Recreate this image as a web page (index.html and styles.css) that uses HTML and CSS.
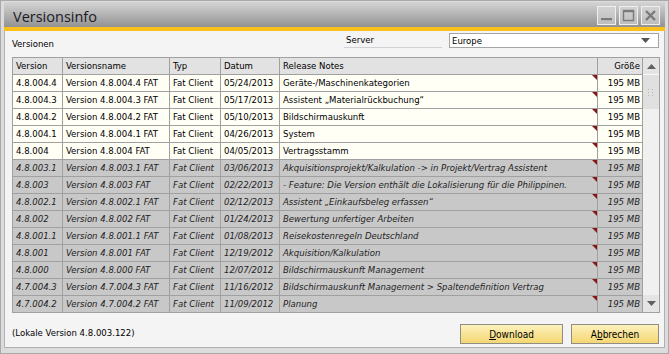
FILE: index.html
```html
<!DOCTYPE html>
<html lang="de">
<head>
<meta charset="utf-8">
<title>Versionsinfo</title>
<link rel="stylesheet" href="styles.css">
</head>
<body>
<div class="window">
  <div class="titlebar">
    <span class="title">Versionsinfo</span>
    <div class="wbtns">
      <span class="wbtn"><svg width="17" height="17" viewBox="0 0 17 17"><rect x="3" y="11" width="11" height="2.2" fill="#7a7a7a"/></svg></span>
      <span class="wbtn"><svg width="17" height="17" viewBox="0 0 17 17"><rect x="3.5" y="3.5" width="10" height="10" fill="none" stroke="#7a7a7a" stroke-width="1.4"/><rect x="3" y="3" width="11" height="2.2" fill="#7a7a7a"/></svg></span>
      <span class="wbtn"><svg width="17" height="17" viewBox="0 0 17 17"><path d="M4 4 L13 13 M13 4 L4 13" stroke="#7a7a7a" stroke-width="2.4"/></svg></span>
    </div>
  </div>
  <div class="accent"></div>
  <div class="client">
    <div class="toprow">
      <span class="lbl-versionen">Versionen</span>
      <span class="server">Server</span>
      <div class="select">
        <span>Europe</span>
        <svg width="9" height="5" viewBox="0 0 9 5"><path d="M0 0 H9 L4.5 5 Z" fill="#555"/></svg>
      </div>
    </div>
    <div class="grid">
      <table>
        <colgroup>
          <col class="c1"><col class="c2"><col class="c3"><col class="c4"><col class="c5"><col class="c6">
        </colgroup>
        <thead>
          <tr><th>Version</th><th>Versionsname</th><th>Typ</th><th>Datum</th><th>Release Notes</th><th class="num">Größe</th></tr>
        </thead>
        <tbody>
          <tr><td>4.8.004.4</td><td>Version 4.8.004.4 FAT</td><td>Fat Client</td><td>05/24/2013</td><td class="notes">Geräte-/Maschinenkategorien</td><td class="num">195 MB</td></tr>
          <tr><td>4.8.004.3</td><td>Version 4.8.004.3 FAT</td><td>Fat Client</td><td>05/17/2013</td><td class="notes">Assistent „Materialrückbuchung“</td><td class="num">195 MB</td></tr>
          <tr><td>4.8.004.2</td><td>Version 4.8.004.2 FAT</td><td>Fat Client</td><td>05/10/2013</td><td class="notes">Bildschirmauskunft</td><td class="num">195 MB</td></tr>
          <tr><td>4.8.004.1</td><td>Version 4.8.004.1 FAT</td><td>Fat Client</td><td>04/26/2013</td><td class="notes">System</td><td class="num">195 MB</td></tr>
          <tr><td>4.8.004</td><td>Version 4.8.004 FAT</td><td>Fat Client</td><td>04/05/2013</td><td class="notes">Vertragsstamm</td><td class="num">195 MB</td></tr>
          <tr class="old"><td>4.8.003.1</td><td>Version 4.8.003.1 FAT</td><td>Fat Client</td><td>03/06/2013</td><td class="notes">Akquisitionsprojekt/Kalkulation -&gt; in Projekt/Vertrag Assistent</td><td class="num">195 MB</td></tr>
          <tr class="old"><td>4.8.003</td><td>Version 4.8.003 FAT</td><td>Fat Client</td><td>02/22/2013</td><td class="notes">- Feature: Die Version enthält die Lokalisierung für die Philippinen.</td><td class="num">195 MB</td></tr>
          <tr class="old"><td>4.8.002.1</td><td>Version 4.8.002.1 FAT</td><td>Fat Client</td><td>02/12/2013</td><td class="notes">Assistent „Einkaufsbeleg erfassen“</td><td class="num">195 MB</td></tr>
          <tr class="old"><td>4.8.002</td><td>Version 4.8.002 FAT</td><td>Fat Client</td><td>01/24/2013</td><td class="notes">Bewertung unfertiger Arbeiten</td><td class="num">195 MB</td></tr>
          <tr class="old"><td>4.8.001.1</td><td>Version 4.8.001.1 FAT</td><td>Fat Client</td><td>01/08/2013</td><td class="notes">Reisekostenregeln Deutschland</td><td class="num">195 MB</td></tr>
          <tr class="old"><td>4.8.001</td><td>Version 4.8.001 FAT</td><td>Fat Client</td><td>12/19/2012</td><td class="notes">Akquisition/Kalkulation</td><td class="num">195 MB</td></tr>
          <tr class="old"><td>4.8.000</td><td>Version 4.8.000 FAT</td><td>Fat Client</td><td>12/07/2012</td><td class="notes">Bildschirmauskunft Management</td><td class="num">195 MB</td></tr>
          <tr class="old"><td>4.7.004.3</td><td>Version 4.7.004.3 FAT</td><td>Fat Client</td><td>11/16/2012</td><td class="notes">Bildschirmauskunft Management &gt; Spaltendefinition Vertrag</td><td class="num">195 MB</td></tr>
          <tr class="old last"><td>4.7.004.2</td><td>Version 4.7.004.2 FAT</td><td>Fat Client</td><td>11/09/2012</td><td class="notes">Planung</td><td class="num">195 MB</td></tr>
        </tbody>
      </table>
      <div class="scrollbar">
        <div class="sb-up"><svg width="9" height="5" viewBox="0 0 9 5"><path d="M0 5 H9 L4.5 0 Z" fill="#606060"/></svg></div>
        <div class="sb-thumb">
          <svg width="6" height="7" viewBox="0 0 6 7"><g fill="#b8b8b8"><rect x="0" y="0" width="1" height="1"/><rect x="4" y="0" width="1" height="1"/><rect x="0" y="3" width="1" height="1"/><rect x="4" y="3" width="1" height="1"/><rect x="0" y="6" width="1" height="1"/><rect x="4" y="6" width="1" height="1"/></g></svg>
        </div>
        <div class="sb-track"></div>
        <div class="sb-down"><svg width="9" height="5" viewBox="0 0 9 5"><path d="M0 0 H9 L4.5 5 Z" fill="#606060"/></svg></div>
      </div>
    </div>
    <div class="bottomrow">
      <span class="local">(Lokale Version 4.8.003.122)</span>
      <button class="btn btn-download"><u>D</u>ownload</button>
      <button class="btn btn-cancel">A<u>b</u>brechen</button>
    </div>
  </div>
</div>
</body>
</html>
```
FILE: styles.css
```css
html, body {
  margin: 0;
  padding: 0;
}
body {
  font-family: "DejaVu Sans Condensed", "DejaVu Sans", sans-serif;
  font-stretch: condensed;
  font-size: 9.5px;
  color: #000;
}
.window {
  width: 669px;
  height: 354px;
  box-sizing: border-box;
  border: 1px solid #a9a9a9;
  background: #dcdcdc;
  padding: 1px 3px 5px 3px;
  display: flex;
  flex-direction: column;
}
.titlebar {
  height: 25px;
  flex: none;
  background: linear-gradient(#d4d4d4, #b0b0b0 55%, #929292);
  display: flex;
  justify-content: space-between;
}
.title {
  align-self: flex-end;
  height: 21px;
  line-height: 21px;
  padding-left: 9px;
  font-family: "Open Sans", sans-serif;
  font-stretch: normal;
  font-size: 14.5px;
  color: #1a1a26;
}
.wbtns {
  display: flex;
  gap: 3px;
  margin-top: 4px;
  margin-right: 5px;
}
.wbtn {
  width: 19px;
  height: 19px;
  box-sizing: border-box;
  border: 1px solid #efefef;
  background: linear-gradient(#d2d2d2, #bebebe);
  display: flex;
  align-items: center;
  justify-content: center;
}
.accent {
  height: 4px;
  flex: none;
  background: #f8bf1d;
}
.client {
  flex: 1;
  background: #f4f4f4;
  border: 1px solid #b0b0b0;
  border-top: none;
  padding: 2px 4px 0 7px;
  display: flex;
  flex-direction: column;
}
.toprow {
  height: 24px;
  display: flex;
  flex: none;
}
.lbl-versionen {
  width: 332px;
  align-self: flex-end;
  line-height: 12px;
  margin-bottom: 7px;
}
.server {
  width: 98px;
  height: 15px;
  box-sizing: border-box;
  line-height: 14px;
  padding-left: 2px;
  border-bottom: 1px solid #d2d2d2;
}
.select {
  width: 210px;
  height: 15px;
  box-sizing: border-box;
  margin-left: 7px;
  border: 1px solid #a4a4a4;
  background: #fff;
  display: flex;
  align-items: center;
  justify-content: space-between;
  padding: 0 8px 0 2px;
}
.grid {
  width: 648px;
  height: 256px;
  box-sizing: border-box;
  border: 1px solid #a0a0a0;
  display: flex;
  flex: none;
  background: #f0f0f0;
}
table {
  border-collapse: separate;
  border-spacing: 0;
  table-layout: fixed;
  width: 630px;
}
col.c1 { width: 50px; }
col.c2 { width: 107px; }
col.c3 { width: 51px; }
col.c4 { width: 59px; }
col.c5 { width: 318px; }
col.c6 { width: 45px; }
th, td {
  height: 16px;
  line-height: 16px;
  padding: 0 0 0 3px;
  border-right: 1px solid #a0a0a0;
  border-bottom: 1px solid #a0a0a0;
  white-space: nowrap;
  overflow: hidden;
  text-align: left;
  font-weight: normal;
}
th {
  background: #e2e2e2;
}
td {
  background: #fffff6;
}
th.num, td.num {
  text-align: right;
  padding: 0 2px 0 0;
}
td.notes {
  position: relative;
}
td.notes::after {
  content: "";
  position: absolute;
  top: 0;
  right: 0;
  width: 0;
  height: 0;
  border-top: 5px solid #8a1515;
  border-left: 5px solid transparent;
}
tr.old td {
  background: #c8c8c8;
  font-style: italic;
  color: #1e1e1e;
}
tr.last td {
  border-bottom: none;
}
.scrollbar {
  width: 16px;
  display: flex;
  flex-direction: column;
  background: #f0f0f0;
}
.sb-up, .sb-down {
  height: 16px;
  display: flex;
  align-items: center;
  justify-content: center;
  background: #e4e4e4;
}
.sb-down {
  height: 17px;
}
.sb-thumb {
  height: 34px;
  background: #e0e0e0;
  border-top: 1px solid #f8f8f8;
  display: flex;
  align-items: center;
  justify-content: center;
}
.sb-track {
  flex: 1;
}
.bottomrow {
  margin-top: 11px;
  height: 20px;
  display: flex;
  align-items: center;
  flex: none;
}
.local {
  flex: 1;
  margin-bottom: 4px;
}
.btn {
  height: 20px;
  box-sizing: border-box;
  border: 1px solid #8e8e84;
  background: linear-gradient(#fdf2bd, #f4d672);
  font-family: "DejaVu Sans Condensed", "DejaVu Sans", sans-serif;
  font-stretch: condensed;
  font-size: 10px;
  color: #000;
  padding: 0;
}
.btn-download {
  width: 103px;
  margin-right: 8px;
}
.btn-cancel {
  width: 88px;
  margin-right: 1px;
}
```
